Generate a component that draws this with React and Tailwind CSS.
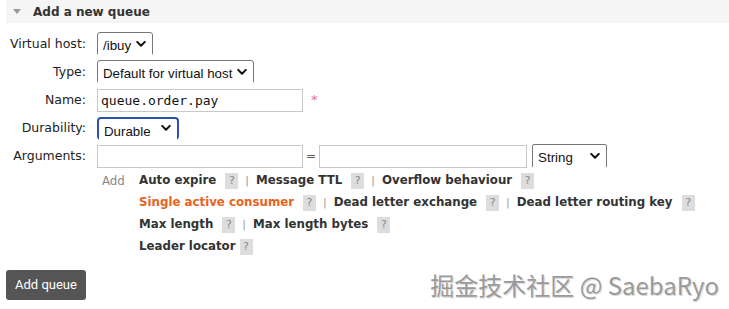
import React from 'react';

const verdana = { fontFamily: '"DejaVu Sans", Verdana, sans-serif' };

function Chevron() {
  return (
    <svg width="10" height="7" viewBox="0 0 10 7" className="pointer-events-none absolute right-[6px] top-1/2 -translate-y-1/2">
      <path d="M1.2 1.4 L5 5.2 L8.8 1.4" fill="none" stroke="#111" strokeWidth="2" strokeLinecap="round" strokeLinejoin="round" />
    </svg>
  );
}

function Select({ value, options, className }) {
  return (
    <div className={'relative ' + className}>
      <select
        defaultValue={value}
        className="h-full w-full appearance-none bg-white pl-[5px] pr-[12px] text-[13.3px] text-[#111] outline-none"
        style={{ fontFamily: '"Liberation Sans", Arial, sans-serif' }}
      >
        {options.map((o) => (
          <option key={o}>{o}</option>
        ))}
      </select>
      <Chevron />
    </div>
  );
}

function Help() {
  return (
    <span className="inline-flex h-[16px] w-[13px] items-center justify-center bg-[#ddd] text-[11px] font-normal text-[#888]">?</span>
  );
}

function Sep() {
  return <span className="mx-[7px] font-normal text-[#999] text-[11px]">|</span>;
}

function Arg({ children, orange, tight }) {
  return (
    <>
      <span className={orange ? 'text-[#ea6220]' : 'text-[#333]'}>{children}</span>
      <span className={tight ? 'ml-[4px]' : 'ml-[9px]'}>
        <Help />
      </span>
    </>
  );
}

function Row({ label, children }) {
  return (
    <div className="flex h-[28px] items-center">
      <div className="w-[87px] pr-[1px] text-right text-[12.5px] text-[#222]">{label}</div>
      <div className="ml-[10px] flex items-center">{children}</div>
    </div>
  );
}

export default function App() {
  return (
    <div className="relative h-[309px] w-[729px] overflow-hidden bg-white" style={verdana}>
      {/* Section header */}
      <div className="ml-[6px] flex h-[23px] items-center bg-[#f5f5f5]">
        <svg width="8" height="6" viewBox="0 0 8 6" className="ml-[7px]">
          <path d="M0 0 L8 0 L4 5 Z" fill="#999" />
        </svg>
        <span className="ml-[12px] text-[12px] font-bold text-[#333]">Add a new queue</span>
      </div>

      <div className="mt-[7px]">
        <Row label="Virtual host:">
          <Select value="/ibuy" options={['/ibuy', '/']} className="h-[24px] w-[56px] rounded-[3px] border border-[#767676]" />
        </Row>
        <Row label="Type:">
          <Select
            value="Default for virtual host"
            options={['Default for virtual host', 'Classic', 'Quorum', 'Stream']}
            className="h-[24px] w-[157px] rounded-[3px] border border-[#767676]"
          />
        </Row>
        <Row label="Name:">
          <input
            defaultValue="queue.order.pay"
            className="h-[23px] w-[206px] border border-[#c8c8c8] px-[3px] text-[13px] text-[#111] outline-none"
            style={{ fontFamily: '"DejaVu Sans Mono", Menlo, monospace' }}
          />
          <span className="ml-[8px] text-[13px] text-[#e0709a]">*</span>
        </Row>
        <Row label="Durability:">
          <Select
            value="Durable"
            options={['Durable', 'Transient']}
            className="h-[23px] w-[82px] rounded-[4px] border-2 border-[#2a52b5]"
          />
        </Row>
        <Row label="Arguments:">
          <input className="h-[23px] w-[206px] border border-[#c8c8c8] outline-none" />
          <span className="mx-[3px] text-[12px] text-[#555]">=</span>
          <input className="h-[23px] w-[208px] border border-[#c8c8c8] outline-none" />
          <Select
            value="String"
            options={['String', 'Number', 'Boolean', 'List']}
            className="ml-[5px] h-[24px] w-[75px] rounded-[2px] border border-[#767676]"
          />
        </Row>
      </div>

      <div className="ml-[102px] mt-0 flex text-[11.8px] font-bold">
        <div className="h-[22px] w-[37px] pt-[3px] font-normal text-[#888]">Add</div>
        <div className="flex flex-col">
          <div className="flex h-[22px] items-center">
            <Arg>Auto expire</Arg>
            <Sep />
            <Arg>Message TTL</Arg>
            <Sep />
            <Arg>Overflow behaviour</Arg>
          </div>
          <div className="flex h-[22px] items-center">
            <Arg orange>Single active consumer</Arg>
            <Sep />
            <Arg>Dead letter exchange</Arg>
            <Sep />
            <Arg>Dead letter routing key</Arg>
          </div>
          <div className="flex h-[22px] items-center">
            <Arg>Max length</Arg>
            <Sep />
            <Arg>Max length bytes</Arg>
          </div>
          <div className="flex h-[22px] items-center">
            <Arg tight>Leader locator</Arg>
          </div>
        </div>
      </div>

      <div className="mt-[9px] flex items-center justify-between pl-[6px] pr-[10px]">
        <button
          className="h-[30px] w-[80px] rounded-[3px] bg-[#555] text-[13px] text-white"
          style={{ fontFamily: 'Roboto, sans-serif' }}
        >
          Add queue
        </button>
        <span
          className="text-[24px] font-normal text-[#999]"
          style={{
            fontFamily: '"Noto Sans CJK SC", sans-serif',
            textShadow: '0 0 1px #fff, 1px 1px 1px rgba(0,0,0,0.2)',
          }}
        >
          掘金技术社区 @ SaebaRyo
        </span>
      </div>
    </div>
  );
}
